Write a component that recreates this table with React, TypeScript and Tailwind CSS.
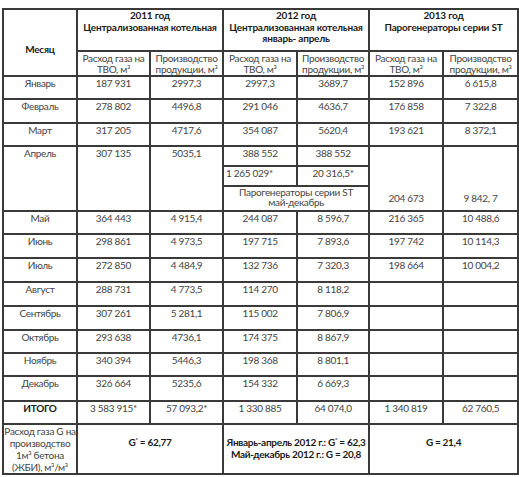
const font = { fontFamily: "Lato, Roboto, 'Noto Sans', sans-serif" }

type Row = { month: string; h: string; v: string[]; bold?: boolean }

const rowsBefore: Row[] = [
    { month: "Январь", h: "h-[23px]", v: ["187 931", "2997,3", "2997,3", "3689,7", "152 896", "6 615,8"] },
    { month: "Февраль", h: "h-[24px]", v: ["278 802", "4496,8", "291 046", "4636,7", "176 858", "7 322,8"] },
    { month: "Март", h: "h-[23px]", v: ["317 205", "4717,6", "354 087", "5620,4", "193 621", "8 372,1"] },
]

const rowsAfter: Row[] = [
    { month: "Май", h: "h-[23px]", v: ["364 443", "4 915,4", "244 087", "8 596,7", "216 365", "10 488,6"] },
    { month: "Июнь", h: "h-[24px]", v: ["298 861", "4 973,5", "197 715", "7 893,6", "197 742", "10 114,3"] },
    { month: "Июль", h: "h-[24px]", v: ["272 850", "4 484,9", "132 736", "7 320,3", "198 664", "10 004,2"] },
    { month: "Август", h: "h-[24px]", v: ["288 731", "4 773,5", "114 270", "8 118,2", "", ""] },
    { month: "Сентябрь", h: "h-[24px]", v: ["307 261", "5 281,1", "115 002", "7 806,9", "", ""] },
    { month: "Октябрь", h: "h-[23px]", v: ["293 638", "4736,1", "174 375", "8 867,9", "", ""] },
    { month: "Ноябрь", h: "h-[23px]", v: ["340 394", "5446,3", "198 368", "8 801,1", "", ""] },
    { month: "Декабрь", h: "h-[25px]", v: ["326 664", "5235,6", "154 332", "6 669,3", "", ""] },
    { month: "ИТОГО", h: "h-[23px]", v: ["3 583 915*", "57 093,2*", "1 330 885", "64 074,0", "1 340 819", "62 760,5"], bold: true },
]

// thin dark rules like the scanned table
const cell = "border-2 border-[#3a3a3a] p-0 align-top text-center whitespace-nowrap"

const DataRow = ({ row }: { row: Row }) => (
    <tr className={row.h}>
        <td className={`${cell} ${row.bold ? "font-bold text-[#1a1a1a]" : ""}`}>{row.month}</td>
        {row.v.map((x, i) => (
            <td key={i} className={cell}>{x}</td>
        ))}
    </tr>
)

const SubHead = () => (
    <>
        <td className={`${cell} leading-[11px] pt-[1px]`}>Расход газа на<br />ТВО, м³</td>
        <td className={`${cell} leading-[11px] pt-[1px]`}>Производство<br />продукции, м³</td>
    </>
)

const Star = () => <sup className="text-[6px] -top-[4px]">*</sup>

export default function App() {
    return (
        <div className="bg-white w-[519px] h-[477px] pt-[8px] pl-[2px]" style={font}>
            <table className="table-fixed border-collapse w-[515px] text-[10px] leading-[12px] tracking-[-0.3px] text-[#444]">
                <colgroup>
                    <col className="w-[74px]" />
                    <col className="w-[73px]" />
                    <col className="w-[73px]" />
                    <col className="w-[74px]" />
                    <col className="w-[72px]" />
                    <col className="w-[74px]" />
                    <col className="w-[75px]" />
                </colgroup>
                <tbody>
                    <tr className="h-[42px] font-bold text-[#1a1a1a] leading-[11.5px] tracking-[-0.2px]">
                        <td rowSpan={2} className={`${cell} !align-middle pt-[14px]`}>Месяц</td>
                        <td colSpan={2} className={cell}>2011 год<br />Централизованная котельная</td>
                        <td colSpan={2} className={cell}>2012 год<br />Централизованная котельная<br />январь- апрель</td>
                        <td colSpan={2} className={cell}>2013 год<br />Парогенераторы серии ST</td>
                    </tr>
                    <tr className="h-[25px]">
                        <SubHead />
                        <SubHead />
                        <SubHead />
                    </tr>
                    {rowsBefore.map((r) => <DataRow key={r.month} row={r} />)}
                    <tr className="h-[20px]">
                        <td rowSpan={3} className={cell}>Апрель</td>
                        <td rowSpan={3} className={cell}>307 135</td>
                        <td rowSpan={3} className={cell}>5035,1</td>
                        <td className={cell}>388 552</td>
                        <td className={cell}>388 552</td>
                        <td rowSpan={3} className={`${cell} !align-bottom pb-[6px]`}>204 673</td>
                        <td rowSpan={3} className={`${cell} !align-bottom pb-[6px]`}>9 842, 7</td>
                    </tr>
                    <tr className="h-[20px]">
                        <td className={`${cell} !text-left pl-[2px]`}>1 265 029*</td>
                        <td className={cell}>20 316,5*</td>
                    </tr>
                    <tr className="h-[25px]">
                        <td colSpan={2} className={`${cell} leading-[10px]`}>Парогенераторы серии ST<br />май-декабрь</td>
                    </tr>
                    {rowsAfter.map((r) => <DataRow key={r.month} row={r} />)}
                    <tr className="h-[50px]">
                        <td className={`${cell} leading-[12px]`}>Расход газа G на<br />производство<br />1м³ бетона<br />(ЖБИ), м³/м³</td>
                        <td colSpan={2} className={`${cell} pt-[11px] font-bold text-[#1a1a1a]`}>G<Star /> = 62,77</td>
                        <td colSpan={2} className={`${cell} pt-[11px] font-bold text-[#1a1a1a] leading-[12px]`}>Январь-апрель 2012 г.: G<Star /> = 62,3<br />Май-декабрь 2012 г.: G = 20,8</td>
                        <td colSpan={2} className={`${cell} pt-[11px] font-bold text-[#1a1a1a]`}>G = 21,4</td>
                    </tr>
                </tbody>
            </table>
        </div>
    )
}
